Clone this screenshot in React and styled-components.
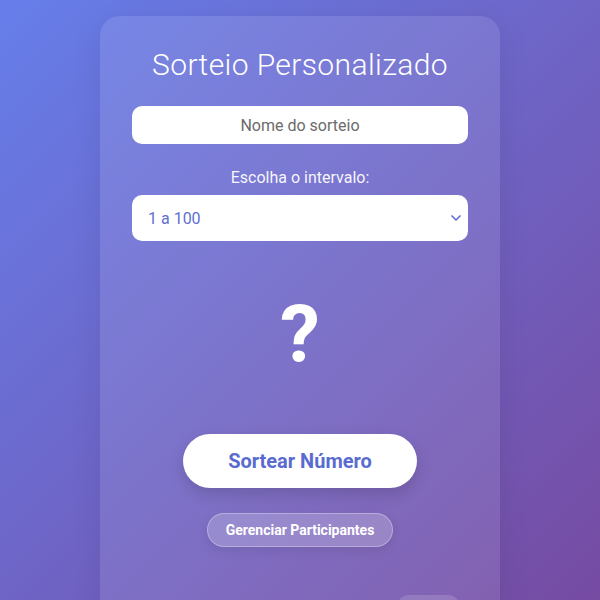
import React from "react";
import styled, { createGlobalStyle } from "styled-components";
import { ChevronDown } from "lucide-react";

const GlobalStyle = createGlobalStyle`
  html, body {
    margin: 0;
    padding: 0;
    height: 100%;
  }
  body {
    font-family: Roboto, "Liberation Sans", sans-serif;
    background: linear-gradient(135deg, #667eea 0%, #764ba2 100%);
    min-height: 600px;
    overflow: hidden;
  }
`;

const Page = styled.div`
  display: flex;
  justify-content: center;
  padding-top: 16px;
`;

const Card = styled.div`
  width: 400px;
  box-sizing: border-box;
  padding: 30px 32px 40px;
  border-radius: 20px;
  background: rgba(255, 255, 255, 0.1);
  box-shadow: 0 8px 32px rgba(0, 0, 0, 0.08);
  display: flex;
  flex-direction: column;
  align-items: center;
  color: #fff;
`;

const Title = styled.h1`
  margin: 0 0 22px;
  font-family: Roboto, sans-serif;
  font-weight: 300;
  font-size: 30px;
  line-height: 38px;
  letter-spacing: 0.4px;
  text-align: center;
`;

const NameInput = styled.input`
  width: 100%;
  box-sizing: border-box;
  height: 38px;
  border: none;
  border-radius: 10px;
  background: #fff;
  font-family: Roboto, sans-serif;
  font-size: 16px;
  text-align: center;
  color: #333;
  outline: none;
  &::placeholder {
    color: #6b6b6b;
  }
`;

const Label = styled.label`
  margin-top: 24px;
  margin-bottom: 7px;
  font-size: 16px;
  line-height: 20px;
  color: rgba(255, 255, 255, 0.95);
`;

const SelectWrap = styled.div`
  position: relative;
  width: 100%;
`;

const Select = styled.select`
  width: 100%;
  height: 46px;
  box-sizing: border-box;
  appearance: none;
  border: none;
  border-radius: 10px;
  background: #fff;
  padding: 0 16px;
  font-family: Roboto, sans-serif;
  font-size: 16px;
  color: #5f70d2;
  outline: none;
`;

const Arrow = styled(ChevronDown)`
  position: absolute;
  right: 4px;
  top: 50%;
  transform: translateY(-50%);
  color: #5f70d2;
  pointer-events: none;
`;

const Result = styled.div`
  margin-top: 48px;
  height: 92px;
  display: flex;
  align-items: center;
  font-size: 80px;
  font-weight: 700;
  color: #fff;
`;

const DrawButton = styled.button`
  margin-top: 53px;
  padding: 15px 45px;
  border: none;
  border-radius: 30px;
  background: #fff;
  color: #5a6bd0;
  font-family: Roboto, sans-serif;
  font-size: 20px;
  line-height: 24px;
  font-weight: 700;
  box-shadow: 0 6px 16px rgba(0, 0, 0, 0.15);
`;

const GhostButton = styled.button`
  margin-top: 25px;
  padding: 8px 18px;
  border: 1px solid rgba(255, 255, 255, 0.3);
  border-radius: 20px;
  background: rgba(255, 255, 255, 0.2);
  color: #fff;
  font-family: Roboto, sans-serif;
  font-size: 14px;
  line-height: 16px;
  font-weight: 700;
  box-shadow: 0 4px 12px rgba(0, 0, 0, 0.08);
`;

const Footer = styled.div`
  width: 100%;
  display: flex;
  justify-content: flex-end;
  margin-top: 48px;
  padding-right: 8px;
  box-sizing: border-box;
`;

const SmallPill = styled.div`
  width: 63px;
  height: 30px;
  border-radius: 12px;
  background: rgba(255, 255, 255, 0.15);
`;

export default function App() {
  return (
    <>
      <GlobalStyle />
      <Page>
        <Card>
          <Title>Sorteio Personalizado</Title>
          <NameInput placeholder="Nome do sorteio" />
          <Label>Escolha o intervalo:</Label>
          <SelectWrap>
            <Select defaultValue="100">
              <option value="10">1 a 10</option>
              <option value="100">1 a 100</option>
              <option value="1000">1 a 1000</option>
            </Select>
            <Arrow size={16} strokeWidth={2.5} />
          </SelectWrap>
          <Result>?</Result>
          <DrawButton>Sortear Número</DrawButton>
          <GhostButton>Gerenciar Participantes</GhostButton>
          <Footer>
            <SmallPill />
          </Footer>
        </Card>
      </Page>
    </>
  );
}
